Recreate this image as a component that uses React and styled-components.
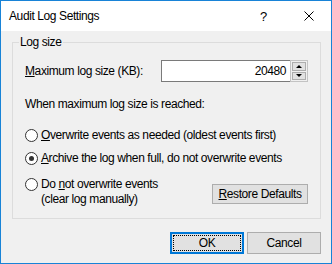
import styled, { createGlobalStyle } from "styled-components";

const GlobalStyle = createGlobalStyle`
  html, body {
    margin: 0;
    padding: 0;
    background: #ffffff;
  }
  body {
    font-family: "Liberation Sans", Arial, sans-serif;
    font-size: 12px;
    letter-spacing: -0.4px;
    color: #000000;
  }
`;

const Dialog = () => {
  return (
    <Window>
      <TitleBar>
        <Title>Audit Log Settings</Title>
        <TitleButton>?</TitleButton>
        <TitleButton>
          <svg width="10" height="10" viewBox="0 0 10 10">
            <path d="M0.5 0.5 L9.5 9.5 M9.5 0.5 L0.5 9.5" stroke="#000" strokeWidth="1" />
          </svg>
        </TitleButton>
      </TitleBar>
      <Body>
        <GroupBox>
          <Legend>Log size</Legend>
          <SizeRow>
            <span>
              <u>M</u>aximum log size (KB):
            </span>
            <Spinner>
              <SpinInput>20480</SpinInput>
              <SpinButtons>
                <SpinButton>
                  <Arrow up />
                </SpinButton>
                <SpinButton>
                  <Arrow />
                </SpinButton>
              </SpinButtons>
            </Spinner>
          </SizeRow>
          <Caption>When maximum log size is reached:</Caption>
          <RadioRow gap={16}>
            <Radio />
            <span>
              <u>O</u>verwrite events as needed (oldest events first)
            </span>
          </RadioRow>
          <RadioRow gap={8}>
            <Radio checked />
            <span>
              <u>A</u>rchive the log when full, do not overwrite events
            </span>
          </RadioRow>
          <LastRow>
            <RadioRow gap={11}>
              <Radio />
              <span>
                Do <u>n</u>ot overwrite events
                <br />
                (clear log manually)
              </span>
            </RadioRow>
            <RestoreButton>
              <u>R</u>estore Defaults
            </RestoreButton>
          </LastRow>
        </GroupBox>
        <Footer>
          <Button width={74} primary>
            <Focus>OK</Focus>
          </Button>
          <Button width={74}>Cancel</Button>
        </Footer>
      </Body>
    </Window>
  );
};

const Window = styled.div`
  width: 332px;
  height: 264px;
  box-sizing: border-box;
  border: 1px solid #1883d7;
  display: flex;
  flex-direction: column;
`;

const TitleBar = styled.div`
  height: 30px;
  background: #ffffff;
  display: flex;
  align-items: center;
  padding-left: 8px;
`;

const Title = styled.div`
  flex: 1;
  font-size: 12px;
  padding-bottom: 1px;
`;

const TitleButton = styled.div`
  width: 45px;
  height: 30px;
  display: flex;
  align-items: center;
  justify-content: center;
  font-size: 13px;
  &:first-of-type {
    width: 46px;
  }
`;

const Body = styled.div`
  flex: 1;
  background: #f0f0f0;
  padding: 4px 10px 0 11px;
  display: flex;
  flex-direction: column;
`;

const GroupBox = styled.fieldset`
  margin: 0;
  border: 1px solid #dcdcdc;
  padding: 0 12px 11px 12px;
  min-width: 0;
`;

const Legend = styled.legend`
  margin-left: -6px;
  padding: 0 1px;
  line-height: 14px;
`;

const SizeRow = styled.div`
  display: flex;
  align-items: center;
  justify-content: space-between;
  margin-top: 11px;
  height: 22px;
`;

const Spinner = styled.div`
  display: flex;
  height: 22px;
`;

const SpinInput = styled.div`
  width: 129px;
  box-sizing: border-box;
  border: 1px solid #7a7a7a;
  border-right: none;
  background: #ffffff;
  text-align: right;
  padding-right: 4px;
  line-height: 20px;
`;

const SpinButtons = styled.div`
  width: 18px;
  box-sizing: border-box;
  border: 1px solid #c3c3c3;
  background: #f0f0f0;
  display: flex;
  flex-direction: column;
  gap: 1px;
  padding: 1px;
`;

const SpinButton = styled.div`
  flex: 1;
  border: 1px solid #adadad;
  background: #e1e1e1;
  display: flex;
  align-items: center;
  justify-content: center;
`;

const Arrow = styled.div`
  width: 0;
  height: 0;
  border-left: 3px solid transparent;
  border-right: 3px solid transparent;
  ${(p) => (p.up ? "border-bottom: 3px solid #000;" : "border-top: 3px solid #000;")}
`;

const Caption = styled.div`
  margin-top: 15px;
  line-height: 15px;
`;

const RadioRow = styled.div`
  display: flex;
  align-items: flex-start;
  gap: 3px;
  line-height: 15px;
  margin-top: ${(p) => p.gap}px;
`;

const Radio = styled.span`
  width: 13px;
  height: 13px;
  box-sizing: border-box;
  margin-top: 1px;
  border: 1px solid #333333;
  border-radius: 50%;
  background: #ffffff;
  display: flex;
  align-items: center;
  justify-content: center;
  flex-shrink: 0;
  &::after {
    content: "";
    width: 5px;
    height: 5px;
    border-radius: 50%;
    background: ${(p) => (p.checked ? "#333333" : "transparent")};
  }
`;

const LastRow = styled.div`
  display: flex;
  justify-content: space-between;
  align-items: flex-start;
`;

const Button = styled.div`
  width: ${(p) => p.width}px;
  height: 22px;
  box-sizing: border-box;
  border: 1px solid ${(p) => (p.primary ? "#0078d7" : "#adadad")};
  box-shadow: ${(p) => (p.primary ? "inset 0 0 0 1px #0078d7" : "none")};
  background: #e1e1e1;
  display: flex;
  align-items: center;
  justify-content: center;
  line-height: 15px;
  padding: 2px;
`;

const RestoreButton = styled(Button)`
  width: 96px;
  height: 20px;
  margin-top: 18px;
`;

const Focus = styled.span`
  flex: 1;
  align-self: stretch;
  display: flex;
  align-items: center;
  justify-content: center;
  border: 1px dotted #000000;
`;

const Footer = styled.div`
  display: flex;
  justify-content: flex-end;
  gap: 3px;
  margin-top: 13px;
`;

export default function App() {
  return (
    <>
      <GlobalStyle />
      <Dialog />
    </>
  );
}
